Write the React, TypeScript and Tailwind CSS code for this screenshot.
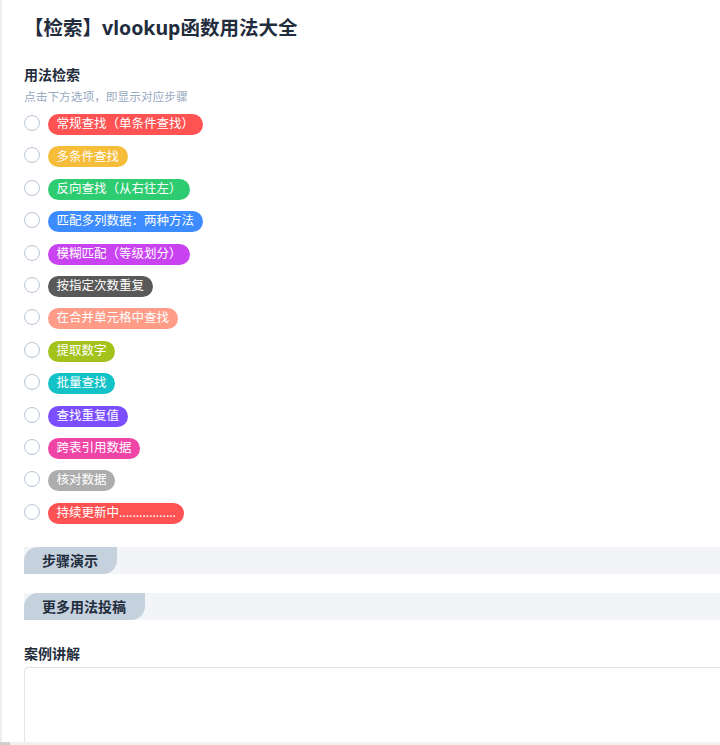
const FONT = { fontFamily: '"Noto Sans", "Noto Sans CJK SC", sans-serif' };

const OPTIONS = [
  { label: "常规查找（单条件查找）", color: "bg-[#ff5252]" },
  { label: "多条件查找", color: "bg-[#f6bd3b]" },
  { label: "反向查找（从右往左）", color: "bg-[#2ecc71]" },
  { label: "匹配多列数据：两种方法", color: "bg-[#3c8cff]" },
  { label: "模糊匹配（等级划分）", color: "bg-[#c944f0]" },
  { label: "按指定次数重复", color: "bg-[#595959]" },
  { label: "在合并单元格中查找", color: "bg-[#ff9c88]" },
  { label: "提取数字", color: "bg-[#a4c21c]" },
  { label: "批量查找", color: "bg-[#12c2c6]" },
  { label: "查找重复值", color: "bg-[#7b4fff]" },
  { label: "跨表引用数据", color: "bg-[#ef45a6]" },
  { label: "核对数据", color: "bg-[#adadad]" },
  { label: "持续更新中.................", color: "bg-[#ff5252]" },
];

function SectionBar({ title }: { title: string }) {
  return (
    <div className="flex h-[27px] w-full bg-[#f3f4f7]">
      <div className="flex items-center rounded-tl-[14px] rounded-br-[14px] bg-[#c6d1de] pl-[18px] pr-[19px] text-[14px] font-bold text-[#1f2d3d]">
        {title}
      </div>
    </div>
  );
}

export default function App() {
  return (
    <div className="flex h-[745px] flex-col overflow-hidden bg-white" style={FONT}>
      <div className="flex min-h-0 flex-1 flex-col border-l-2 border-[#eceef1] pl-[22px] pt-[14px]">
        <h1 className="text-[19.5px] font-bold leading-[28px] text-[#1f2d3d]">【检索】vlookup函数用法大全</h1>

        <div className="mt-[23px] text-[14px] font-bold leading-[20px] text-[#1f2d3d]">用法检索</div>
        <div className="mt-[2px] text-[11.7px] leading-[18px] text-[#99a9bf]">点击下方选项，即显示对应步骤</div>

        <div className="mt-[9px] flex flex-col gap-[11.4px]">
          {OPTIONS.map((o) => (
            <label key={o.label} className="flex items-start gap-2">
              <span className="mt-[1px] h-4 w-4 shrink-0 rounded-full border border-[#b9c5d4] bg-white" />
              <span
                className={`flex h-[21px] items-center rounded-full px-[8.5px] text-[12.5px] text-white ${o.color}`}
              >
                {o.label}
              </span>
            </label>
          ))}
        </div>

        <div className="mt-[23px]">
          <SectionBar title="步骤演示" />
        </div>
        <div className="mt-[19px]">
          <SectionBar title="更多用法投稿" />
        </div>

        <div className="mt-[24px] text-[14px] font-bold leading-[20px] text-[#1f2d3d]">案例讲解</div>
        <div className="mt-[3px] flex-1 rounded-tl-[4px] border-l border-t border-[#e4e4e4] bg-[#fefefe]" />
      </div>
      <div className="flex h-[3px] shrink-0 bg-[#f1f1f1]">
        <div className="w-[10px] bg-[#cfcfcf]" />
      </div>
    </div>
  );
}
